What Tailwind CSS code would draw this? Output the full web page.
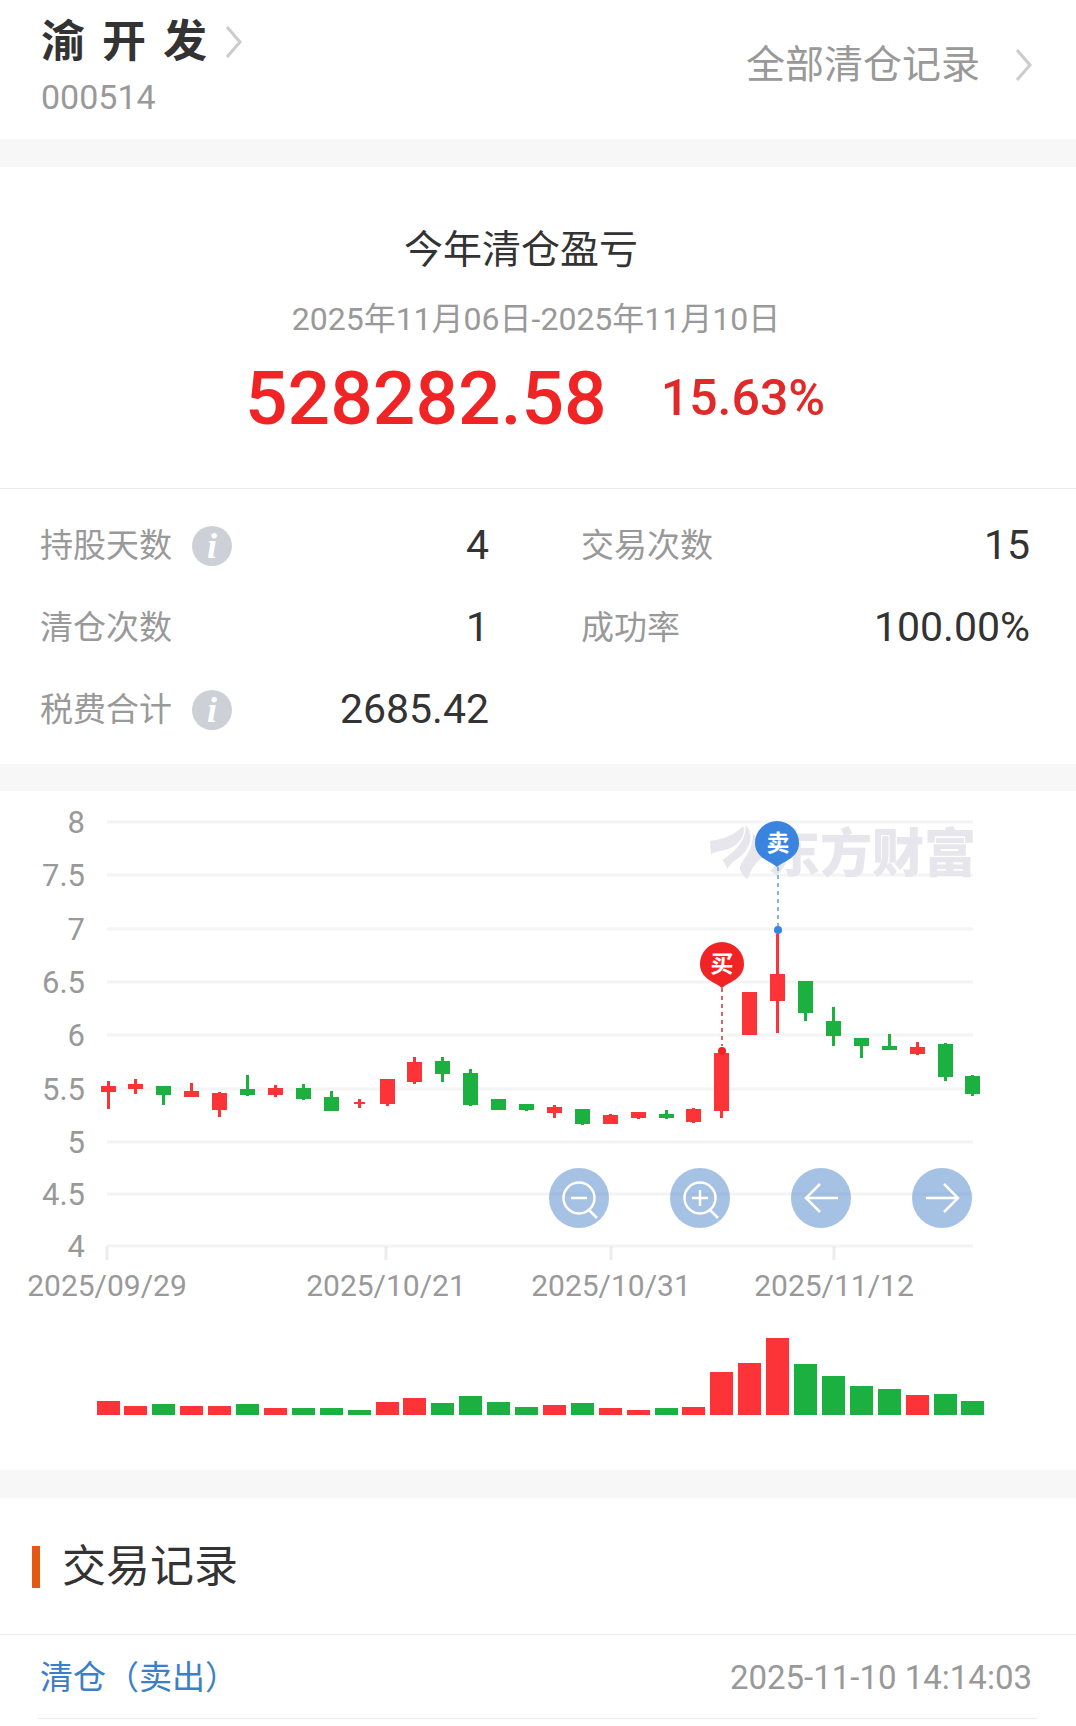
<!DOCTYPE html>
<html lang="zh-CN">
<head>
  <meta charset="UTF-8" />
  <meta name="viewport" content="width=device-width, initial-scale=1.0" />
  <title>渝开发 清仓记录</title>
  <script src="https://cdn.jsdelivr.net/npm/@tailwindcss/browser@4"></script>
</head>
<body class="bg-[#f7f7f7] text-[#333333] font-[Roboto,'Noto_Sans_CJK_SC',sans-serif]">
  <!-- HEADER -->
  <header class="bg-white h-[139px] pl-[41px] pr-[44px] flex justify-between">
    <div class="pt-3">
      <a href="#" class="flex items-center">
        <h1 class="flex gap-[17px] text-[44px] leading-[60px] font-bold"><span>渝</span> <span>开</span> <span>发</span></h1>
        <svg class="ml-[19px] w-4 h-8" viewBox="0 0 16 32" fill="none" stroke="#cccccc" stroke-width="3"><path d="M1 1 L14 16 L1 31" /></svg>
      </a>
      <p class="mt-[5px] text-[34px] leading-[40px] text-[#999999]">000514</p>
    </div>
    <a href="#" class="flex items-center h-[130px] text-[39px] text-[#999999]">
      全部清仓记录
      <svg class="ml-[36px] w-4 h-8" viewBox="0 0 16 32" fill="none" stroke="#cccccc" stroke-width="3"><path d="M1 1 L14 16 L1 31" /></svg>
    </a>
  </header>

  <!-- SUMMARY -->
  <section class="bg-white mt-7 pt-[53px] pb-[50px] text-center border-b border-[#ececec]">
    <h2 class="pr-[34px] text-[39px] leading-[60px]">今年清仓盈亏</h2>
    <p class="mt-[17px] pr-1 text-[32px] leading-[44px] text-[#999999]">2025年11月06日-2025年11月10日</p>
    <p class="mt-[17px] pr-[6px] flex justify-center items-center gap-[54px] leading-[80px] font-medium text-[#f02424]">
      <span class="text-[75px]">528282.58</span>
      <span class="text-[50px] text-[#e02a2a]">15.63%</span>
    </p>
  </section>

  <!-- STATS -->
  <dl class="bg-white pt-4 pb-[13px] pl-[40px] pr-[46px] grid grid-cols-2 gap-x-[92px] text-[33px]">
    <div class="h-[82px] flex items-center justify-between">
      <dt class="flex items-center gap-[20px] text-[#999999]">持股天数
        <button aria-label="持股天数说明" class="w-10 h-10 rounded-full bg-[#cdd0d6] text-white font-['Liberation_Serif',serif] font-bold italic text-[36px] leading-[38px]">i</button>
      </dt>
      <dd class="text-[41px]">4</dd>
    </div>
    <div class="h-[82px] flex items-center justify-between">
      <dt class="text-[#999999]">交易次数</dt>
      <dd class="text-[41px]">15</dd>
    </div>
    <div class="h-[82px] flex items-center justify-between">
      <dt class="text-[#999999]">清仓次数</dt>
      <dd class="text-[41px]">1</dd>
    </div>
    <div class="h-[82px] flex items-center justify-between">
      <dt class="text-[#999999]">成功率</dt>
      <dd class="text-[41px]">100.00%</dd>
    </div>
    <div class="h-[82px] flex items-center justify-between">
      <dt class="flex items-center gap-[20px] text-[#999999]">税费合计
        <button aria-label="税费合计说明" class="w-10 h-10 rounded-full bg-[#cdd0d6] text-white font-['Liberation_Serif',serif] font-bold italic text-[36px] leading-[38px]">i</button>
      </dt>
      <dd class="text-[41px]">2685.42</dd>
    </div>
  </dl>

  <!-- CHART -->
  <section class="relative bg-white mt-[27px]">
    <svg class="block w-full" viewBox="0 791 1076 679" role="img" aria-label="K线图">
      <g id="grid" stroke="#f4f4f4" stroke-width="3"></g>
      <g id="labels" fill="#999999"></g>

      <!-- watermark -->
      <g fill="#e6e6ec">
        <g transform="translate(680 800) scale(0.3333)">
          <path d="M90 122 C128 120 165 104 190 78 C198 108 176 136 142 148 C120 154 102 156 93 163 Z" />
          <path d="M128 180 C160 158 198 128 197 76 C210 90 214 104 211 120 C206 146 188 166 170 178 C154 189 148 197 143 207 Z" />
          <path d="M180 208 C178 182 222 158 218 98 L270 160 C240 172 216 196 202 238 C190 228 184 220 180 208 Z" />
        </g>
        <text x="768" y="872" class="text-[52px] font-black">东方财富</text>
      </g>

      <g id="candles"></g>
      <g id="volumes"></g>

      <!-- buy marker -->
      <g fill="#f02424">
        <path d="M722 988 V1046" stroke="#d96464" stroke-width="2" stroke-dasharray="4 4" />
        <circle cx="722" cy="1051" r="4" />
        <path d="M722 988 C715 982 700 979 700 964 A22 22 0 1 1 744 964 C744 979 729 982 722 988 Z" />
        <text x="722" y="972" text-anchor="middle" class="text-[23px] font-bold" fill="#ffffff">买</text>
      </g>
      <!-- sell marker -->
      <g fill="#3a84e0">
        <path d="M778 867 V926" stroke="#86b2e0" stroke-width="2" stroke-dasharray="4 4" />
        <circle cx="778" cy="930" r="4" />
        <path d="M777 867 C770 861 755 858 755 843 A22 22 0 1 1 799 843 C799 858 784 861 777 867 Z" />
        <text x="778" y="851" text-anchor="middle" class="text-[23px] font-bold" fill="#ffffff">卖</text>
      </g>
    </svg>

    <div class="absolute inset-x-0 top-[55.5%] pr-[9.7%] flex justify-end gap-[61px]">
      <button aria-label="缩小" class="w-[60px] h-[60px] rounded-full bg-[#4b83c7]/50">
        <svg viewBox="0 0 60 60" fill="none" stroke="#ffffff" stroke-width="2.5"><circle cx="30" cy="30" r="15.5" /><path d="M22 30 H38 M40 42 L48 50" /></svg>
      </button>
      <button aria-label="放大" class="w-[60px] h-[60px] rounded-full bg-[#4b83c7]/50">
        <svg viewBox="0 0 60 60" fill="none" stroke="#ffffff" stroke-width="2.5"><circle cx="30" cy="30" r="15.5" /><path d="M22 30 H38 M30 22 V38 M40 42 L48 50" /></svg>
      </button>
      <button aria-label="向左" class="w-[60px] h-[60px] rounded-full bg-[#4b83c7]/50">
        <svg viewBox="0 0 60 60" fill="none" stroke="#ffffff" stroke-width="2.5"><path d="M47 30 H15 M29 16 L15 30 L29 44" /></svg>
      </button>
      <button aria-label="向右" class="w-[60px] h-[60px] rounded-full bg-[#4b83c7]/50">
        <svg viewBox="0 0 60 60" fill="none" stroke="#ffffff" stroke-width="2.5"><path d="M14 30 H46 M32 16 L46 30 L32 44" /></svg>
      </button>
    </div>
  </section>

  <!-- TRADE RECORDS -->
  <section class="bg-white mt-7">
    <div class="h-[137px] pt-[2px] pl-8 flex items-center gap-[22px] border-b border-[#ececec]">
      <span class="w-2 h-[42px] bg-[#e2590f]"></span>
      <h2 class="text-[44px]">交易记录</h2>
    </div>
    <ul class="px-[38px]">
      <li class="h-[84px] pt-[2px] pl-[2px] pr-[6px] flex items-center justify-between text-[33px] border-b border-[#ececec]">
        <span class="text-[#3c7fc6]">清仓（卖出）</span>
        <time class="text-[#999999]">2025-11-10 14:14:03</time>
      </li>
    </ul>
    <div class="h-2"></div>
  </section>

  <script>
    const RED = '#fc3438';
    const GREEN = '#1bb040';
    const X0 = 107.5;
    const STEP = 27.9;
    const BASE = 1415;

    // [color, body top, body bottom, wick top, wick bottom, volume, volume color if different]
    const days = [
      ['r', 1086, 1092, 1081, 1109, 14],
      ['r', 1084, 1089, 1079, 1094, 9],
      ['g', 1086, 1095, 1086, 1105, 11],
      ['r', 1091, 1097, 1083, 1097, 9],
      ['r', 1093, 1110, 1092, 1117, 9],
      ['g', 1089, 1095, 1075, 1096, 11],
      ['r', 1088, 1095, 1085, 1097, 7],
      ['g', 1088, 1099, 1084, 1100, 7],
      ['g', 1097, 1111, 1091, 1111, 7],
      ['r', 1102, 1104, 1099, 1108, 5, 'g'],
      ['r', 1079, 1104, 1079, 1106, 13],
      ['r', 1062, 1082, 1057, 1084, 17],
      ['g', 1061, 1074, 1057, 1082, 12],
      ['g', 1073, 1105, 1069, 1106, 19],
      ['g', 1099, 1110, 1099, 1110, 13],
      ['g', 1104, 1110, 1104, 1111, 8],
      ['r', 1107, 1113, 1105, 1118, 10],
      ['g', 1109, 1124, 1109, 1125, 12],
      ['r', 1115, 1124, 1114, 1124, 7],
      ['r', 1112, 1118, 1112, 1119, 5],
      ['g', 1114, 1118, 1110, 1119, 7],
      ['r', 1109, 1122, 1108, 1123, 8],
      ['r', 1053, 1111, 1053, 1118, 43],
      ['r', 992, 1035, 992, 1035, 52],
      ['r', 974, 1001, 934, 1033, 77],
      ['g', 981, 1013, 981, 1021, 51],
      ['g', 1021, 1036, 1007, 1046, 39],
      ['g', 1038, 1046, 1038, 1058, 29],
      ['g', 1046, 1050, 1034, 1050, 26],
      ['r', 1047, 1054, 1042, 1055, 20],
      ['g', 1044, 1077, 1043, 1081, 21],
      ['g', 1076, 1094, 1075, 1096, 14]
    ];

    const prices = [['8', 822], ['7.5', 875], ['7', 929], ['6.5', 982], ['6', 1035], ['5.5', 1089], ['5', 1142], ['4.5', 1194], ['4', 1246]];
    const dates = [[107, '2025/09/29'], [386, '2025/10/21'], [611, '2025/10/31'], [834, '2025/11/12']];

    const grid = document.getElementById('grid');
    const labels = document.getElementById('labels');

    prices.forEach(([p, y]) => {
      grid.innerHTML += `<path d="M107 ${y} H973" />`;
      labels.innerHTML += `<text x="85" y="${y + 11}" text-anchor="end" class="text-[31px]">${p}</text>`;
    });

    dates.forEach(([x, text]) => {
      grid.innerHTML += `<path d="M${x} 1246 V1260" stroke="#ececec" />`;
      labels.innerHTML += `<text x="${x}" y="1296" text-anchor="middle" class="text-[30px]">${text}</text>`;
    });

    document.getElementById('candles').innerHTML = days.map(([c, top, bottom, high, low], i) => {
      const x = Math.round(X0 + i * STEP);
      const color = c === 'r' ? RED : GREEN;
      const w = bottom - top < 3 ? 11 : 15;
      return `<rect x="${x - 1}" y="${high}" width="3" height="${low - high}" fill="${color}" />
        <rect x="${x - (w - 1) / 2}" y="${top}" width="${w}" height="${bottom - top}" fill="${color}" />`;
    }).join('');

    document.getElementById('volumes').innerHTML = days.map(([c, , , , , v, vc = c], i) => {
      const x = Math.round(X0 + i * STEP);
      return `<rect x="${x - 11}" y="${BASE - v}" width="23" height="${v}" fill="${vc === 'r' ? RED : GREEN}" />`;
    }).join('');
  </script>
</body>
</html>
